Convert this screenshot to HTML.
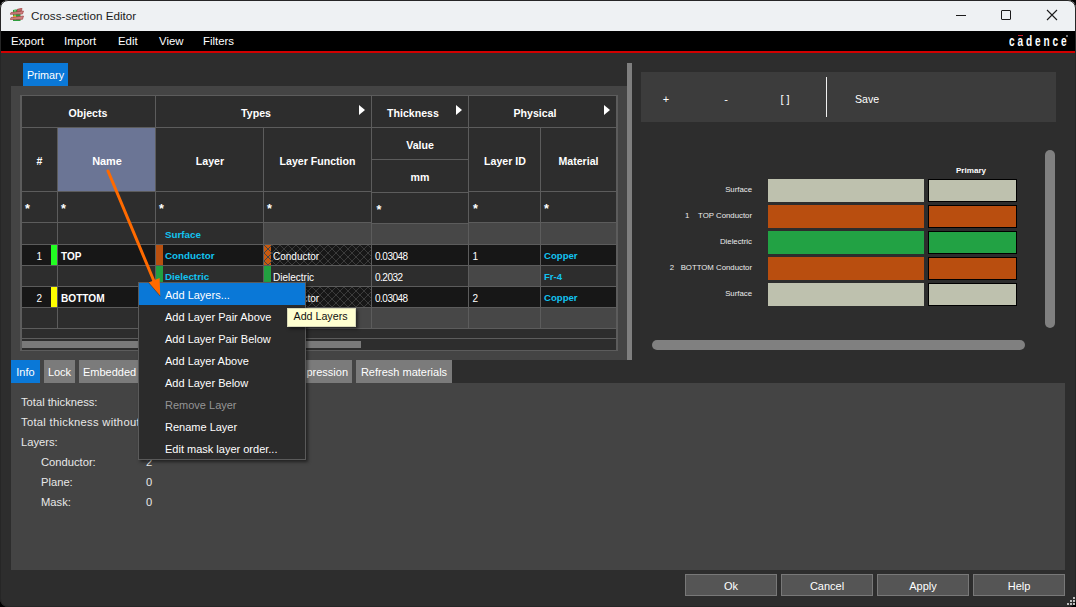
<!DOCTYPE html>
<html><head><meta charset="utf-8">
<style>
*{box-sizing:border-box;margin:0;padding:0}
html,body{width:1076px;height:607px;overflow:hidden;background:#2d2d2d;font-family:"Liberation Sans",sans-serif;color:#fff}
.a{position:absolute}
.t{white-space:nowrap}
.hatch{background-color:#171717;background-image:repeating-linear-gradient(45deg,transparent 0,transparent 4.76px,#3e3e3e 4.76px,#3e3e3e 5.66px),repeating-linear-gradient(-45deg,transparent 0,transparent 4.76px,#3e3e3e 4.76px,#3e3e3e 5.66px)}
.hatcho{background-color:#c85a10;background-image:repeating-linear-gradient(45deg,transparent 0,transparent 4.76px,#3a4650 4.76px,#3a4650 5.66px),repeating-linear-gradient(-45deg,transparent 0,transparent 4.76px,#3a4650 4.76px,#3a4650 5.66px)}
</style></head><body>
<div id="win" class="a" style="left:0;top:0;width:1076px;height:607px;background:#2d2d2d;overflow:hidden">

<div class="a" style="left:0px;top:0px;width:1076px;height:31px;background:#eef1f3;border-top-left-radius:8px;border-top-right-radius:8px"></div>
<div class="a t" style="left:31px;top:8.5px;font-size:11.7px;color:#1b1b1b;font-weight:normal;">Cross-section Editor</div>
<div class="a" style="left:956px;top:15px;width:10px;height:1px;background:#1b1b1b;"></div>
<div class="a" style="left:1001px;top:10px;width:10px;height:10px;border:1px solid #1b1b1b;border-radius:1px"></div>
<svg class="a" style="left:1046px;top:9px" width="12" height="12" viewBox="0 0 12 12"><path d="M1 1 L11 11 M11 1 L1 11" stroke="#1b1b1b" stroke-width="1.1"/></svg>
<svg class="a" style="left:10px;top:8px" width="14" height="14" viewBox="0 0 14 14">
<path d="M3 2 L10.5 1 L10.5 13 L3 13 Z" fill="#2e9e3e"/>
<path d="M4 2 L6 1.5 L6 12 L4 12 Z" fill="#5cc86a"/>
<path d="M7.5 1.2 L12 0.2 L11.5 3 L7 3.6 Z" fill="#c46a6a" stroke="#9c3a3a" stroke-width="0.6"/>
<path d="M1 4.5 L13.5 3 L12.5 6 L0.3 6.3 Z" fill="#cf8080" stroke="#a04545" stroke-width="0.7"/>
<path d="M1 9.5 L13.5 8 L12.5 11.3 L0.3 11.5 Z" fill="#cf8080" stroke="#a04545" stroke-width="0.7"/>
<rect x="3" y="7.8" width="3" height="1.2" fill="#e8a020"/>
</svg>
<div class="a" style="left:0px;top:31px;width:1076px;height:20px;background:#000;"></div>
<div class="a" style="left:0px;top:51px;width:1076px;height:2px;background:#d20000;"></div>
<div class="a t" style="left:11px;top:31px;height:20px;line-height:20px;font-size:11.4px;color:#fff;font-weight:normal;">Export</div>
<div class="a t" style="left:64px;top:31px;height:20px;line-height:20px;font-size:11.4px;color:#fff;font-weight:normal;">Import</div>
<div class="a t" style="left:118px;top:31px;height:20px;line-height:20px;font-size:11.4px;color:#fff;font-weight:normal;">Edit</div>
<div class="a t" style="left:159px;top:31px;height:20px;line-height:20px;font-size:11.4px;color:#fff;font-weight:normal;">View</div>
<div class="a t" style="left:203px;top:31px;height:20px;line-height:20px;font-size:11.4px;color:#fff;font-weight:normal;">Filters</div>
<div class="a t" style="left:1009px;top:33px;font-size:14px;font-weight:bold;color:#fff;letter-spacing:4px;transform:scaleX(0.72);transform-origin:0 0">cadence</div>
<div class="a" style="left:1018px;top:35px;width:5px;height:1px;background:#d0202a;"></div>
<div class="a" style="left:1066px;top:35px;width:2px;height:2px;border-radius:1px;background:#999"></div>
<div class="a" style="left:11px;top:86px;width:616px;height:274px;background:#444;"></div>
<div class="a" style="left:23px;top:63px;width:45px;height:23px;background:#0a78d7;"></div>
<div class="a t" style="left:-54.5px;top:64.5px;width:200px;height:20px;line-height:20px;text-align:center;font-size:10.8px;color:#fff;font-weight:normal;">Primary</div>
<div class="a" style="left:627px;top:63px;width:5px;height:297px;background:#7f7f7f;"></div>
<div class="a" style="left:20px;top:95px;width:598px;height:256px;background:#5c5c5c;"></div>
<div class="a" style="left:22px;top:96px;width:594px;height:254px;background:#2d2d2d;"></div>
<div class="a" style="left:58px;top:128px;width:97px;height:63px;background:#6b7595;"></div>
<div class="a" style="left:22px;top:245px;width:594px;height:20px;background:#171717;"></div>
<div class="a" style="left:22px;top:287px;width:594px;height:20px;background:#171717;"></div>
<div class="a" style="left:372px;top:224px;width:96px;height:20px;background:#474747;"></div>
<div class="a" style="left:264px;top:223px;width:107px;height:21px;background:#474747;"></div>
<div class="a" style="left:264px;top:308px;width:107px;height:20px;background:#474747;"></div>
<div class="a" style="left:372px;top:308px;width:96px;height:20px;background:#474747;"></div>
<div class="a" style="left:469px;top:223px;width:71px;height:21px;background:#474747;"></div>
<div class="a" style="left:469px;top:308px;width:71px;height:20px;background:#474747;"></div>
<div class="a" style="left:541px;top:223px;width:75px;height:21px;background:#474747;"></div>
<div class="a" style="left:541px;top:308px;width:75px;height:20px;background:#474747;"></div>
<div class="a" style="left:469px;top:266px;width:71px;height:20px;background:#474747;"></div>
<svg class="a" style="left:0;top:0" width="0" height="0"><defs><pattern id="ph" x="0" y="0" width="8" height="8" patternUnits="userSpaceOnUse"><path d="M-1 -1 L9 9 M9 -1 L-1 9" stroke="#3f3f3f" stroke-width="0.9" fill="none"/></pattern><pattern id="po" x="0" y="0" width="8" height="8" patternUnits="userSpaceOnUse"><rect width="8" height="8" fill="#c85a10"/><path d="M-1 -1 L9 9 M9 -1 L-1 9" stroke="#34444e" stroke-width="0.9" fill="none"/></pattern></defs></svg>
<svg class="a" style="left:264px;top:245px" width="107" height="20"><rect width="107" height="20" fill="#171717"/><rect width="107" height="20" fill="url(#ph)"/><rect width="7" height="20" fill="url(#po)"/></svg>
<div class="a" style="left:156px;top:245px;width:7px;height:20px;background:#b9500f;"></div>
<svg class="a" style="left:264px;top:287px" width="107" height="20"><rect width="107" height="20" fill="#171717"/><rect width="107" height="20" fill="url(#ph)"/><rect width="7" height="20" fill="url(#po)"/></svg>
<div class="a" style="left:156px;top:287px;width:7px;height:20px;background:#b9500f;"></div>
<div class="a" style="left:156px;top:266px;width:7px;height:20px;background:#22a040;"></div>
<div class="a" style="left:264px;top:266px;width:7px;height:20px;background:#22a040;"></div>
<div class="a" style="left:51px;top:245px;width:6px;height:20px;background:#22ff22;"></div>
<div class="a" style="left:51px;top:287px;width:6px;height:20px;background:#ffff00;"></div>
<div class="a" style="left:22px;top:127px;width:594px;height:1px;background:#5c5c5c;"></div>
<div class="a" style="left:22px;top:191px;width:349px;height:1px;background:#5c5c5c;"></div>
<div class="a" style="left:469px;top:191px;width:147px;height:1px;background:#5c5c5c;"></div>
<div class="a" style="left:372px;top:192px;width:96px;height:1px;background:#5c5c5c;"></div>
<div class="a" style="left:372px;top:223px;width:96px;height:1px;background:#5c5c5c;"></div>
<div class="a" style="left:22px;top:222px;width:349px;height:1px;background:#5c5c5c;"></div>
<div class="a" style="left:469px;top:222px;width:147px;height:1px;background:#5c5c5c;"></div>
<div class="a" style="left:22px;top:244px;width:594px;height:1px;background:#5c5c5c;"></div>
<div class="a" style="left:22px;top:265px;width:594px;height:1px;background:#5c5c5c;"></div>
<div class="a" style="left:22px;top:286px;width:594px;height:1px;background:#5c5c5c;"></div>
<div class="a" style="left:22px;top:307px;width:594px;height:1px;background:#5c5c5c;"></div>
<div class="a" style="left:22px;top:328px;width:594px;height:1px;background:#5c5c5c;"></div>
<div class="a" style="left:371px;top:159px;width:97px;height:1px;background:#5c5c5c;"></div>
<div class="a" style="left:155px;top:96px;width:1px;height:232px;background:#5c5c5c;"></div>
<div class="a" style="left:371px;top:96px;width:1px;height:232px;background:#5c5c5c;"></div>
<div class="a" style="left:468px;top:96px;width:1px;height:232px;background:#5c5c5c;"></div>
<div class="a" style="left:57px;top:127px;width:1px;height:201px;background:#5c5c5c;"></div>
<div class="a" style="left:263px;top:127px;width:1px;height:201px;background:#5c5c5c;"></div>
<div class="a" style="left:540px;top:127px;width:1px;height:201px;background:#5c5c5c;"></div>
<div class="a" style="left:22px;top:338px;width:594px;height:1px;background:#5c5c5c;"></div>
<div class="a" style="left:22px;top:339px;width:594px;height:11px;background:#2d2d2d;"></div>
<div class="a" style="left:22px;top:341px;width:339px;height:7px;background:#7a7a7a;"></div>
<div class="a t" style="left:-12.0px;top:103px;width:200px;height:20px;line-height:20px;text-align:center;font-size:10.6px;color:#fff;font-weight:bold;">Objects</div>
<div class="a t" style="left:156.0px;top:103px;width:200px;height:20px;line-height:20px;text-align:center;font-size:10.6px;color:#fff;font-weight:bold;">Types</div>
<div class="a t" style="left:313.0px;top:103px;width:200px;height:20px;line-height:20px;text-align:center;font-size:10.6px;color:#fff;font-weight:bold;">Thickness</div>
<div class="a t" style="left:435.0px;top:103px;width:200px;height:20px;line-height:20px;text-align:center;font-size:10.6px;color:#fff;font-weight:bold;">Physical</div>
<svg class="a" style="left:359px;top:105px" width="6" height="10"><path d="M0 0 L6 5 L0 10 Z" fill="#fff"/></svg>
<svg class="a" style="left:456px;top:105px" width="6" height="10"><path d="M0 0 L6 5 L0 10 Z" fill="#fff"/></svg>
<svg class="a" style="left:604px;top:105px" width="6" height="10"><path d="M0 0 L6 5 L0 10 Z" fill="#fff"/></svg>
<div class="a t" style="left:-60.5px;top:151px;width:200px;height:20px;line-height:20px;text-align:center;font-size:10.6px;color:#fff;font-weight:bold;">#</div>
<div class="a t" style="left:7.0px;top:151px;width:200px;height:20px;line-height:20px;text-align:center;font-size:10.9px;color:#fff;font-weight:bold;">Name</div>
<div class="a t" style="left:110.0px;top:151px;width:200px;height:20px;line-height:20px;text-align:center;font-size:10.6px;color:#fff;font-weight:bold;">Layer</div>
<div class="a t" style="left:217.5px;top:151px;width:200px;height:20px;line-height:20px;text-align:center;font-size:10.6px;color:#fff;font-weight:bold;">Layer Function</div>
<div class="a t" style="left:320.0px;top:135px;width:200px;height:20px;line-height:20px;text-align:center;font-size:10.6px;color:#fff;font-weight:bold;">Value</div>
<div class="a t" style="left:320.0px;top:167px;width:200px;height:20px;line-height:20px;text-align:center;font-size:10.6px;color:#fff;font-weight:bold;">mm</div>
<div class="a t" style="left:405.0px;top:151px;width:200px;height:20px;line-height:20px;text-align:center;font-size:10.6px;color:#fff;font-weight:bold;">Layer ID</div>
<div class="a t" style="left:478.5px;top:151px;width:200px;height:20px;line-height:20px;text-align:center;font-size:10.6px;color:#fff;font-weight:bold;">Material</div>
<div class="a t" style="left:25px;top:199px;height:20px;line-height:20px;font-size:12.5px;color:#fff;font-weight:bold;">*</div>
<div class="a t" style="left:61px;top:199px;height:20px;line-height:20px;font-size:12.5px;color:#fff;font-weight:bold;">*</div>
<div class="a t" style="left:159px;top:199px;height:20px;line-height:20px;font-size:12.5px;color:#fff;font-weight:bold;">*</div>
<div class="a t" style="left:267px;top:199px;height:20px;line-height:20px;font-size:12.5px;color:#fff;font-weight:bold;">*</div>
<div class="a t" style="left:376.5px;top:200px;height:20px;line-height:20px;font-size:12.5px;color:#fff;font-weight:bold;">*</div>
<div class="a t" style="left:473px;top:199px;height:20px;line-height:20px;font-size:12.5px;color:#fff;font-weight:bold;">*</div>
<div class="a t" style="left:544px;top:199px;height:20px;line-height:20px;font-size:12.5px;color:#fff;font-weight:bold;">*</div>
<div class="a t" style="left:165px;top:225px;height:20px;line-height:20px;font-size:9.8px;color:#12c3f0;font-weight:bold;">Surface</div>
<div class="a t" style="left:-258px;top:246.5px;width:300px;height:20px;line-height:20px;text-align:right;font-size:10px;color:#fff;font-weight:normal;">1</div>
<div class="a t" style="left:61px;top:246.5px;height:20px;line-height:20px;font-size:10px;color:#fff;font-weight:bold;">TOP</div>
<div class="a t" style="left:165px;top:246px;height:20px;line-height:20px;font-size:9.8px;color:#12c3f0;font-weight:bold;">Conductor</div>
<div class="a t" style="left:273px;top:246.5px;height:20px;line-height:20px;font-size:10px;color:#fff;font-weight:normal;">Conductor</div>
<div class="a t" style="left:375px;top:246.5px;height:20px;line-height:20px;font-size:10px;color:#fff;font-weight:normal;letter-spacing:-0.5px">0.03048</div>
<div class="a t" style="left:472.5px;top:246.5px;height:20px;line-height:20px;font-size:10px;color:#fff;font-weight:normal;">1</div>
<div class="a t" style="left:544px;top:246px;height:20px;line-height:20px;font-size:9.6px;color:#12c3f0;font-weight:bold;">Copper</div>
<div class="a t" style="left:165px;top:267px;height:20px;line-height:20px;font-size:9.8px;color:#12c3f0;font-weight:bold;">Dielectric</div>
<div class="a t" style="left:273px;top:267.5px;height:20px;line-height:20px;font-size:10px;color:#fff;font-weight:normal;">Dielectric</div>
<div class="a t" style="left:375px;top:267.5px;height:20px;line-height:20px;font-size:10px;color:#fff;font-weight:normal;letter-spacing:-0.5px">0.2032</div>
<div class="a t" style="left:544px;top:267px;height:20px;line-height:20px;font-size:9.6px;color:#12c3f0;font-weight:bold;">Fr-4</div>
<div class="a t" style="left:-258px;top:288.5px;width:300px;height:20px;line-height:20px;text-align:right;font-size:10px;color:#fff;font-weight:normal;">2</div>
<div class="a t" style="left:61px;top:288.5px;height:20px;line-height:20px;font-size:10.1px;color:#fff;font-weight:bold;">BOTTOM</div>
<div class="a t" style="left:165px;top:288px;height:20px;line-height:20px;font-size:9.8px;color:#12c3f0;font-weight:bold;">Conductor</div>
<div class="a t" style="left:273px;top:288.5px;height:20px;line-height:20px;font-size:10px;color:#fff;font-weight:normal;">Conductor</div>
<div class="a t" style="left:375px;top:288.5px;height:20px;line-height:20px;font-size:10px;color:#fff;font-weight:normal;letter-spacing:-0.5px">0.03048</div>
<div class="a t" style="left:472.5px;top:288.5px;height:20px;line-height:20px;font-size:10px;color:#fff;font-weight:normal;">2</div>
<div class="a t" style="left:544px;top:288px;height:20px;line-height:20px;font-size:9.6px;color:#12c3f0;font-weight:bold;">Copper</div>
<div class="a" style="left:641px;top:72px;width:415px;height:50px;background:#3c3c3c;"></div>
<div class="a t" style="left:566.0px;top:89px;width:200px;height:20px;line-height:20px;text-align:center;font-size:11px;color:#fff;font-weight:normal;">+</div>
<div class="a t" style="left:626.0px;top:89px;width:200px;height:20px;line-height:20px;text-align:center;font-size:11px;color:#fff;font-weight:normal;">-</div>
<div class="a t" style="left:685.0px;top:89px;width:200px;height:20px;line-height:20px;text-align:center;font-size:11px;color:#fff;font-weight:normal;">[ ]</div>
<div class="a" style="left:826px;top:77px;width:1px;height:40px;background:#f0f0f0;"></div>
<div class="a t" style="left:855px;top:88.5px;height:20px;line-height:20px;font-size:10.6px;color:#fff;font-weight:normal;">Save</div>
<div class="a t" style="left:871.0px;top:161px;width:200px;height:20px;line-height:20px;text-align:center;font-size:8.1px;color:#fff;font-weight:bold;">Primary</div>
<div class="a" style="left:768px;top:179px;width:156px;height:23px;background:#bec1ae;"></div>
<div class="a" style="left:928px;top:179px;width:89px;height:23px;background:#bec1ae;border:1px solid #000"></div>
<div class="a t" style="left:452px;top:180px;width:300px;height:20px;line-height:20px;text-align:right;font-size:7.8px;color:#ececec;font-weight:normal;">Surface</div>
<div class="a" style="left:768px;top:205px;width:156px;height:23px;background:#b94e0f;"></div>
<div class="a" style="left:928px;top:205px;width:89px;height:23px;background:#b94e0f;border:1px solid #000"></div>
<div class="a t" style="left:452px;top:206px;width:300px;height:20px;line-height:20px;text-align:right;font-size:7.8px;color:#ececec;font-weight:normal;">1&nbsp;&nbsp;&nbsp;&nbsp;TOP Conductor</div>
<div class="a" style="left:768px;top:231px;width:156px;height:23px;background:#22a244;"></div>
<div class="a" style="left:928px;top:231px;width:89px;height:23px;background:#22a244;border:1px solid #000"></div>
<div class="a t" style="left:452px;top:232px;width:300px;height:20px;line-height:20px;text-align:right;font-size:7.8px;color:#ececec;font-weight:normal;">Dielectric</div>
<div class="a" style="left:768px;top:257px;width:156px;height:23px;background:#b94e0f;"></div>
<div class="a" style="left:928px;top:257px;width:89px;height:23px;background:#b94e0f;border:1px solid #000"></div>
<div class="a t" style="left:452px;top:258px;width:300px;height:20px;line-height:20px;text-align:right;font-size:7.8px;color:#ececec;font-weight:normal;">2&nbsp;&nbsp;&nbsp;BOTTOM Conductor</div>
<div class="a" style="left:768px;top:283px;width:156px;height:23px;background:#bec1ae;"></div>
<div class="a" style="left:928px;top:283px;width:89px;height:23px;background:#bec1ae;border:1px solid #000"></div>
<div class="a t" style="left:452px;top:284px;width:300px;height:20px;line-height:20px;text-align:right;font-size:7.8px;color:#ececec;font-weight:normal;">Surface</div>
<div class="a" style="left:652px;top:340px;width:373px;height:10px;background:#808080;border-radius:5px"></div>
<div class="a" style="left:1045px;top:150px;width:10px;height:178px;background:#808080;border-radius:5px"></div>
<div class="a" style="left:11px;top:360px;width:441px;height:23px;background:#444;"></div>
<div class="a" style="left:11px;top:360px;width:29px;height:23px;background:#0a78d7;"></div>
<div class="a t" style="left:-74.5px;top:361.5px;width:200px;height:20px;line-height:20px;text-align:center;font-size:11px;color:#fff;font-weight:normal;">Info</div>
<div class="a" style="left:44px;top:360px;width:31px;height:23px;background:#7b7b7b;"></div>
<div class="a t" style="left:-40.5px;top:361.5px;width:200px;height:20px;line-height:20px;text-align:center;font-size:11px;color:#fff;font-weight:normal;">Lock</div>
<div class="a" style="left:356px;top:360px;width:96px;height:23px;background:#7b7b7b;"></div>
<div class="a t" style="left:304.0px;top:361.5px;width:200px;height:20px;line-height:20px;text-align:center;font-size:11px;color:#fff;font-weight:normal;">Refresh materials</div>
<div class="a" style="left:79px;top:360px;width:273px;height:23px;background:#7b7b7b;"></div>
<div class="a t" style="left:83px;top:361.5px;height:20px;line-height:20px;font-size:11px;color:#fff;font-weight:normal;">Embedded</div>
<div class="a t" style="left:48px;top:361.5px;width:300px;height:20px;line-height:20px;text-align:right;font-size:11px;color:#fff;font-weight:normal;">pression</div>
<div class="a" style="left:11px;top:383px;width:1054px;height:187px;background:#444;"></div>
<div class="a t" style="left:21px;top:392px;height:20px;line-height:20px;font-size:11.2px;color:#e8e8e8;font-weight:normal;">Total thickness:</div>
<div class="a t" style="left:21px;top:412px;height:20px;line-height:20px;font-size:11.2px;color:#e8e8e8;font-weight:normal;letter-spacing:0.3px">Total thickness without</div>
<div class="a t" style="left:21px;top:432px;height:20px;line-height:20px;font-size:11.2px;color:#e8e8e8;font-weight:normal;">Layers:</div>
<div class="a t" style="left:41px;top:452px;height:20px;line-height:20px;font-size:11.2px;color:#e8e8e8;font-weight:normal;">Conductor:</div>
<div class="a t" style="left:41px;top:472px;height:20px;line-height:20px;font-size:11.2px;color:#e8e8e8;font-weight:normal;">Plane:</div>
<div class="a t" style="left:41px;top:492px;height:20px;line-height:20px;font-size:11.2px;color:#e8e8e8;font-weight:normal;">Mask:</div>
<div class="a t" style="left:146px;top:452px;height:20px;line-height:20px;font-size:11.2px;color:#e8e8e8;font-weight:normal;">2</div>
<div class="a t" style="left:146px;top:472px;height:20px;line-height:20px;font-size:11.2px;color:#e8e8e8;font-weight:normal;">0</div>
<div class="a t" style="left:146px;top:492px;height:20px;line-height:20px;font-size:11.2px;color:#e8e8e8;font-weight:normal;">0</div>
<div class="a" style="left:685px;top:574px;width:92px;height:22px;background:#555;border:1px solid #787878"></div>
<div class="a t" style="left:631.0px;top:576px;width:200px;height:20px;line-height:20px;text-align:center;font-size:11px;color:#fff;font-weight:normal;">Ok</div>
<div class="a" style="left:781px;top:574px;width:92px;height:22px;background:#555;border:1px solid #787878"></div>
<div class="a t" style="left:727.0px;top:576px;width:200px;height:20px;line-height:20px;text-align:center;font-size:11px;color:#fff;font-weight:normal;">Cancel</div>
<div class="a" style="left:877px;top:574px;width:92px;height:22px;background:#555;border:1px solid #787878"></div>
<div class="a t" style="left:823.0px;top:576px;width:200px;height:20px;line-height:20px;text-align:center;font-size:11px;color:#fff;font-weight:normal;">Apply</div>
<div class="a" style="left:973px;top:574px;width:92px;height:22px;background:#555;border:1px solid #787878"></div>
<div class="a t" style="left:919.0px;top:576px;width:200px;height:20px;line-height:20px;text-align:center;font-size:11px;color:#fff;font-weight:normal;">Help</div>
<div class="a" style="left:138px;top:282px;width:168px;height:178px;background:#2b2b2b;border:1px solid #5a5a5a;box-shadow:2px 2px 3px rgba(0,0,0,0.5)"></div>
<div class="a" style="left:139px;top:283px;width:166px;height:22px;background:#0a78d7;"></div>
<div class="a t" style="left:165px;top:285px;height:20px;line-height:20px;font-size:11px;color:#fff;font-weight:normal;">Add Layers...</div>
<div class="a t" style="left:165px;top:307px;height:20px;line-height:20px;font-size:11px;color:#fff;font-weight:normal;">Add Layer Pair Above</div>
<div class="a t" style="left:165px;top:329px;height:20px;line-height:20px;font-size:11px;color:#fff;font-weight:normal;">Add Layer Pair Below</div>
<div class="a t" style="left:165px;top:351px;height:20px;line-height:20px;font-size:11px;color:#fff;font-weight:normal;">Add Layer Above</div>
<div class="a t" style="left:165px;top:373px;height:20px;line-height:20px;font-size:11px;color:#fff;font-weight:normal;">Add Layer Below</div>
<div class="a t" style="left:165px;top:395px;height:20px;line-height:20px;font-size:11px;color:#959595;font-weight:normal;">Remove Layer</div>
<div class="a t" style="left:165px;top:417px;height:20px;line-height:20px;font-size:11px;color:#fff;font-weight:normal;">Rename Layer</div>
<div class="a t" style="left:165px;top:439px;height:20px;line-height:20px;font-size:11px;color:#fff;font-weight:normal;">Edit mask layer order...</div>
<div class="a t" style="left:287px;top:308px;width:69px;height:19px;background:#ffffd0;border:1px solid #d9d9b8;font-size:10.7px;line-height:15.5px;color:#111;padding-left:5.5px;box-shadow:2px 2px 3px rgba(0,0,0,0.5)">Add Layers</div>
<svg class="a" style="left:0;top:0" width="1076" height="607">
<line x1="108" y1="171" x2="156" y2="286" stroke="#ff6a00" stroke-width="3" stroke-linecap="round"/>
<path d="M148.6 282.6 L160.3 296.3 L159.6 278 Z" fill="#ff6a00"/>
<path d="M148.6 282.6 L160.3 296.3" stroke="#2a2a30" stroke-width="0.6" opacity="0.8"/>
</svg>
<div class="a" style="left:0;top:0;width:1076px;height:607px;border:1px solid #262626;border-radius:8px;box-shadow:0 0 0 8px #000;pointer-events:none"></div>
<div class="a" style="left:1073px;top:597px;width:2px;height:2px;background:#bdbdbd;"></div>
<div class="a" style="left:1070px;top:600px;width:2px;height:2px;background:#bdbdbd;"></div>
<div class="a" style="left:1073px;top:600px;width:2px;height:2px;background:#bdbdbd;"></div>
<div class="a" style="left:1067px;top:603px;width:2px;height:2px;background:#bdbdbd;"></div>
<div class="a" style="left:1070px;top:603px;width:2px;height:2px;background:#bdbdbd;"></div>
<div class="a" style="left:1073px;top:603px;width:2px;height:2px;background:#bdbdbd;"></div>
</div></body></html>
